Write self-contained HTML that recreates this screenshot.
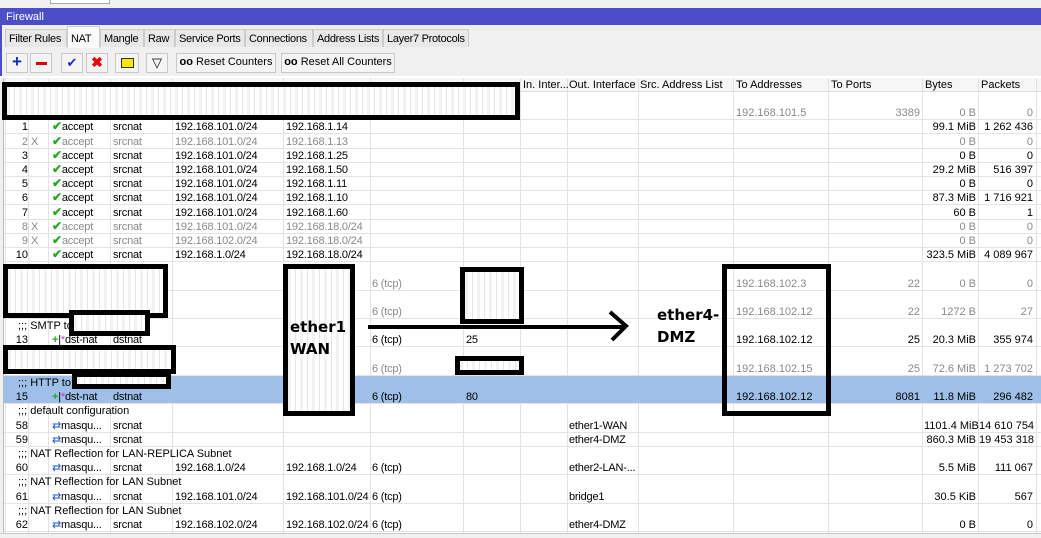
<!DOCTYPE html>
<html><head><meta charset="utf-8"><style>
*{margin:0;padding:0;box-sizing:border-box}
body{width:1041px;height:538px;overflow:hidden;background:#fff;font-family:"Liberation Sans",Arial,sans-serif;font-size:11px;color:#000;position:relative}
.a{position:absolute}
.top{left:0;top:0;width:1041px;height:8px;background:#f0f0f0}
.title{left:0;top:8px;width:1041px;height:17px;background:#4c4ec8;color:#fff;font-size:11px;padding:3px 0 0 6px}
.tabbar{left:0;top:25px;width:1041px;height:25px;background:#f0f0f0;border-left:2px solid #4c4ec8}
.tab{position:absolute;top:4px;height:18px;border:1px solid #ccc;border-bottom:none;background:#e8e8e8;padding:3px 0 0 3px;font-size:11px;letter-spacing:-0.3px;white-space:nowrap;overflow:hidden}
.tb{left:0;top:50px;width:1041px;height:26px;background:#f0f0f0;border-left:2px solid #4c4ec8}
.btn{position:absolute;top:3px;height:20px;border:1px solid #c8c8c8;background:#f4f4f4;font-size:11px;text-align:center;white-space:nowrap}
.hdr{left:4px;top:78px;width:1037px;height:14px;background:#f6f6f6;border-bottom:1px solid #ddd}
.row{position:absolute;left:4px;width:1037px;height:14px;border-bottom:1px solid #e4e4e4;white-space:nowrap}
.row>span{position:absolute;top:1px}
.row b{line-height:10px}
.r{text-align:right}
.g{color:#8a8a8a}
.sel{background:#9dbfe8}
.box{position:absolute;border:5px solid #000}
.vl{position:absolute;top:78px;width:1px;height:455px;background:#e2e2e2}
.big{position:absolute;font-family:"DejaVu Sans",sans-serif;font-weight:bold;font-size:15px;line-height:22px}
.blur{background:repeating-linear-gradient(90deg,#f2f2f2 0 3px,#fff 3px 7px,#e4e4e4 7px 8px,#fff 8px 12px)}
</style></head><body>
<div class="a top"><div class="a" style="left:50px;top:0;width:60px;height:4px;background:#fff;border:1px solid #aaa;border-top:none"></div></div>
<div class="a title">Firewall</div>
<div class="a tabbar">
<div class="tab" style="left:3px;width:62px">Filter Rules</div>
<div class="tab" style="left:65px;width:33px;background:#fafafa;top:1px;height:22px;padding-top:6px">NAT</div>
<div class="tab" style="left:98px;width:44px">Mangle</div>
<div class="tab" style="left:142px;width:31px">Raw</div>
<div class="tab" style="left:173px;width:70px">Service Ports</div>
<div class="tab" style="left:243px;width:68px">Connections</div>
<div class="tab" style="left:311px;width:70px">Address Lists</div>
<div class="tab" style="left:381px;width:86px">Layer7 Protocols</div>
</div>
<div class="a tb">
<div class="btn" style="left:4px;width:22px;color:#1030c0;font-weight:bold;font-size:17px;line-height:16px">+</div>
<div class="btn" style="left:28px;width:22px"><div class="a" style="left:5px;top:8px;width:11px;height:3px;background:#d00"></div></div>
<div class="btn" style="left:59px;width:22px;color:#1030c0;font-size:13px;line-height:17px">✔</div>
<div class="btn" style="left:84px;width:22px;color:#e00;font-weight:bold;font-size:14px;line-height:17px">✖</div>
<div class="btn" style="left:113px;width:24px"><div class="a" style="left:5px;top:4px;width:13px;height:10px;background:#ffe600;border:1px solid #333"></div></div>
<div class="btn" style="left:144px;width:22px;font-size:13px;line-height:17px">▽</div>
<div class="btn" style="left:174px;width:100px;line-height:17px"><b>oo</b> Reset Counters</div>
<div class="btn" style="left:279px;width:114px;line-height:17px"><b>oo</b> Reset All Counters</div>
</div>
<div class="a hdr"></div>
<div id="g"></div>
<div class="a" style="left:0;top:533px;width:1041px;height:5px;background:#f0f0f0;border-top:1px solid #ccc"></div>
<div class="a" style="left:0;top:78px;width:4px;height:455px;background:#f0f0f0;border-right:1px solid #bbb"></div>

<div class="box blur" style="left:2px;top:82px;width:518px;height:38px"></div>
<div class="box blur" style="left:3px;top:264px;width:165px;height:54px"></div>
<div class="box blur" style="left:69px;top:310px;width:81px;height:26px"></div>
<div class="box blur" style="left:3px;top:345px;width:173px;height:29px"></div>
<div class="box blur" style="left:72px;top:372px;width:99px;height:17px"></div>
<div class="box blur" style="left:283px;top:264px;width:72px;height:152px"></div>
<div class="box blur" style="left:460px;top:267px;width:64px;height:57px"></div>
<div class="box blur" style="left:455px;top:356px;width:69px;height:19px"></div>
<div class="box" style="left:722px;top:264px;width:109px;height:152px"></div>
<div class="big" style="left:290px;top:316px">ether1<br>WAN</div>
<div class="big" style="left:657px;top:304px">ether4-<br>DMZ</div>
<svg class="a" style="left:0;top:0" width="1041" height="538"><path d="M368 327H625M610 312L626 326L612 340" stroke="#000" stroke-width="4" fill="none"/></svg>
<script>
var cols=[5,28,48,110,172,283,370,463,520,567,638,733,828,922,978,1036];
var h='';cols.forEach(function(x){h+='<div class="vl" style="left:'+x+'px"></div>'});
var hd=[[523,'In. Inter...'],[569,'Out. Interface'],[640,'Src. Address List'],[736,'To Addresses'],[831,'To Ports'],[925,'Bytes'],[981,'Packets']];
hd.forEach(function(c){h+='<div class="a" style="left:'+c[0]+'px;top:79px">'+c[1]+'</div>'});
var A='<b style="color:#2a2;font-size:12px">✔</b>accept',M='<b style="color:#25c;font-weight:normal">⇄</b>masqu...',D='<b style="color:#2a2">+</b>|<b style="color:#c3c;font-weight:normal">*</b>dst-nat';
var R=[
['c',''],
['r','','','','','','','','','','','','192.168.101.5','3389','0 B','0',1],
['r','1','',A,'srcnat','192.168.101.0/24','192.168.1.14','','','','','','','','99.1 MiB','1 262 436'],
['r','2','X',A,'srcnat','192.168.101.0/24','192.168.1.13','','','','','','','','0 B','0',1],
['r','3','',A,'srcnat','192.168.101.0/24','192.168.1.25','','','','','','','','0 B','0'],
['r','4','',A,'srcnat','192.168.101.0/24','192.168.1.50','','','','','','','','29.2 MiB','516 397'],
['r','5','',A,'srcnat','192.168.101.0/24','192.168.1.11','','','','','','','','0 B','0'],
['r','6','',A,'srcnat','192.168.101.0/24','192.168.1.10','','','','','','','','87.3 MiB','1 716 921'],
['r','7','',A,'srcnat','192.168.101.0/24','192.168.1.60','','','','','','','','60 B','1'],
['r','8','X',A,'srcnat','192.168.101.0/24','192.168.18.0/24','','','','','','','','0 B','0',1],
['r','9','X',A,'srcnat','192.168.102.0/24','192.168.18.0/24','','','','','','','','0 B','0',1],
['r','10','',A,'srcnat','192.168.1.0/24','192.168.18.0/24','','','','','','','','323.5 MiB','4 089 967'],
['c',''],
['r','11','','','','','','6 (tcp)','','','','','192.168.102.3','22','0 B','0',1],
['c',''],
['r','12','','','','','','6 (tcp)','','','','','192.168.102.12','22','1272 B','27',1],
['c',';;; SMTP to'],
['r','13','',D,'dstnat','','','6 (tcp)','25','','','','192.168.102.12','25','20.3 MiB','355 974'],
['c',''],
['r','14','','','','','','6 (tcp)','','','','','192.168.102.15','25','72.6 MiB','1 273 702',1],
['c',';;; HTTP to','','',2],
['r','15','',D,'dstnat','','','6 (tcp)','80','','','','192.168.102.12','8081','11.8 MiB','296 482',2],
['c',';;; default configuration'],
['r','58','',M,'srcnat','','','','','','ether1-WAN','','','','1101.4 MiB','14 610 754'],
['r','59','',M,'srcnat','','','','','','ether4-DMZ','','','','860.3 MiB','19 453 318'],
['c',';;; NAT Reflection for LAN-REPLICA Subnet'],
['r','60','',M,'srcnat','192.168.1.0/24','192.168.1.0/24','6 (tcp)','','','ether2-LAN-...','','','','5.5 MiB','111 067'],
['c',';;; NAT Reflection for LAN Subnet'],
['r','61','',M,'srcnat','192.168.101.0/24','192.168.101.0/24','6 (tcp)','','','bridge1','','','','30.5 KiB','567'],
['c',';;; NAT Reflection for LAN Subnet'],
['r','62','',M,'srcnat','192.168.102.0/24','192.168.102.0/24','6 (tcp)','','','ether4-DMZ','','','','0 B','0']];
var y=92;
R.forEach(function(r){
 if(r[0]=='c'){h+='<div class="row'+(r[4]==2?' sel':'')+'" style="top:'+y+'px;border-bottom:none"><span style="left:14px">'+r[1]+'</span></div>';}
 else{var s=r[16];h+='<div class="row'+(s==1?' g':'')+(s==2?' sel':'')+'" style="top:'+y+'px">';
 h+='<span class="r" style="left:4px;width:20px">'+r[1]+'</span><span style="left:27px">'+r[2]+'</span>';
 var xs=[48,109,171,282,368,462,519,565,0,732];
 for(var i=3;i<=10;i++){if(r[i])h+='<span style="left:'+xs[i-3]+'px;letter-spacing:-0.2px">'+r[i]+'</span>';}
 if(r[12])h+='<span style="left:732px">'+r[12]+'</span>';
 h+='<span class="r" style="left:824px;width:92px">'+r[13]+'</span><span class="r" style="left:920px;width:52px">'+r[14]+'</span><span class="r" style="left:975px;width:54px">'+r[15]+'</span></div>';}
 y+=14.2;});
document.getElementById('g').innerHTML=h;
</script>
</body></html>
